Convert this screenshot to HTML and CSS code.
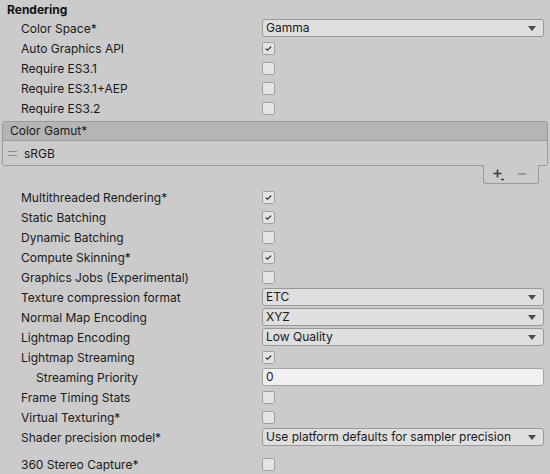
FILE: index.html
```html
<!DOCTYPE html>
<html>
<head>
<meta charset="utf-8">
<link rel="stylesheet" href="styles.css">
</head>
<body>
<div class="panel">
  <div class="section-title">Rendering</div>

  <div class="row"><span class="label">Color Space*</span><div class="dropdown"><span>Gamma</span><i class="arrow"></i></div></div>
  <div class="row"><span class="label">Auto Graphics API</span><span class="cb checked"><svg viewBox="0 0 13 13"><path d="M3.2 6.6 L5.3 8.6 L9.6 4.2" fill="none" stroke="#1a1a1a" stroke-width="1.3"/></svg></span></div>
  <div class="row"><span class="label">Require ES3.1</span><span class="cb"></span></div>
  <div class="row"><span class="label">Require ES3.1+AEP</span><span class="cb"></span></div>
  <div class="row"><span class="label">Require ES3.2</span><span class="cb"></span></div>

  <div class="list">
    <div class="list-head">Color Gamut*</div>
    <div class="list-body"><span class="handle"></span><span>sRGB</span></div>
  </div>
  <div class="list-foot-wrap">
    <div class="list-foot">
      <span class="plus"><svg viewBox="0 0 12 12" width="12" height="12"><path d="M0.5 4.5 H8.5 M4.5 0.5 V8.5" stroke="#3a3a3a" stroke-width="1.6" fill="none"/><path d="M8 10.5 H11" stroke="#3a3a3a" stroke-width="1.4"/></svg></span>
      <span class="minus"></span>
    </div>
  </div>

  <div class="row"><span class="label">Multithreaded Rendering*</span><span class="cb checked"><svg viewBox="0 0 13 13"><path d="M3.2 6.6 L5.3 8.6 L9.6 4.2" fill="none" stroke="#1a1a1a" stroke-width="1.3"/></svg></span></div>
  <div class="row"><span class="label">Static Batching</span><span class="cb checked"><svg viewBox="0 0 13 13"><path d="M3.2 6.6 L5.3 8.6 L9.6 4.2" fill="none" stroke="#1a1a1a" stroke-width="1.3"/></svg></span></div>
  <div class="row"><span class="label">Dynamic Batching</span><span class="cb"></span></div>
  <div class="row"><span class="label">Compute Skinning*</span><span class="cb checked"><svg viewBox="0 0 13 13"><path d="M3.2 6.6 L5.3 8.6 L9.6 4.2" fill="none" stroke="#1a1a1a" stroke-width="1.3"/></svg></span></div>
  <div class="row"><span class="label">Graphics Jobs (Experimental)</span><span class="cb"></span></div>
  <div class="row"><span class="label">Texture compression format</span><div class="dropdown"><span>ETC</span><i class="arrow"></i></div></div>
  <div class="row"><span class="label">Normal Map Encoding</span><div class="dropdown"><span>XYZ</span><i class="arrow"></i></div></div>
  <div class="row"><span class="label">Lightmap Encoding</span><div class="dropdown"><span>Low Quality</span><i class="arrow"></i></div></div>
  <div class="row"><span class="label">Lightmap Streaming</span><span class="cb checked"><svg viewBox="0 0 13 13"><path d="M3.2 6.6 L5.3 8.6 L9.6 4.2" fill="none" stroke="#1a1a1a" stroke-width="1.3"/></svg></span></div>
  <div class="row"><span class="label indent">Streaming Priority</span><div class="textfield">0</div></div>
  <div class="row"><span class="label">Frame Timing Stats</span><span class="cb"></span></div>
  <div class="row"><span class="label">Virtual Texturing*</span><span class="cb"></span></div>
  <div class="row"><span class="label">Shader precision model*</span><div class="dropdown"><span>Use platform defaults for sampler precision</span><i class="arrow"></i></div></div>
  <div class="row spaced"><span class="label">360 Stereo Capture*</span><span class="cb"></span></div>
</div>
</body>
</html>
```

FILE: styles.css
```css
html, body {
  margin: 0;
  padding: 0;
  background: #cbcbcb;
}
body {
  width: 550px;
  height: 474px;
  overflow: hidden;
  font-family: Inter, "Noto Sans", sans-serif;
  font-size: 12px;
  color: #1a1a1a;
}
.panel {
  display: flex;
  flex-direction: column;
}
.section-title {
  height: 19px;
  line-height: 20px;
  padding-left: 7px;
  font-weight: bold;
  color: #111111;
}
.row {
  display: grid;
  grid-template-columns: 262px 1fr;
  align-items: center;
  height: 18px;
  margin-bottom: 2px;
  padding-right: 6px;
}
.row.spaced {
  margin-top: 7px;
}
.label {
  padding-left: 21px;
  white-space: nowrap;
}
.label.indent {
  padding-left: 36px;
}
.dropdown {
  height: 16px;
  border: 1px solid #999999;
  border-radius: 3px;
  background: #dfdfdf;
  display: flex;
  align-items: center;
  justify-content: space-between;
  padding: 0 7px 0 3px;
  line-height: 16px;
}
.arrow {
  width: 0;
  height: 0;
  border-left: 4px solid transparent;
  border-right: 4px solid transparent;
  border-top: 5px solid #4a4a4a;
}
.textfield {
  height: 16px;
  line-height: 16px;
  border: 1px solid #a4a4a4;
  border-radius: 3px;
  background: #f0f0f0;
  padding-left: 3px;
}
.cb {
  width: 11px;
  height: 11px;
  border: 1px solid #a0a0a0;
  border-radius: 2px;
  background: #e4e4e4;
  display: flex;
}
.cb svg {
  width: 11px;
  height: 11px;
}
.list {
  margin: 2px 2px 0 2px;
  border: 1px solid #9a9a9a;
  border-radius: 3px;
  overflow: hidden;
}
.list-head {
  height: 18px;
  line-height: 18px;
  background: #b5b5b5;
  border-bottom: 1px solid #9a9a9a;
  padding-left: 7px;
}
.list-body {
  height: 24px;
  display: flex;
  align-items: center;
  background: #cbcbcb;
}
.handle {
  width: 9px;
  height: 5px;
  border-top: 1px solid #8a8a8a;
  border-bottom: 1px solid #8a8a8a;
  margin: 0 7px 0 5px;
  box-sizing: border-box;
}
.list-foot-wrap {
  display: flex;
  justify-content: flex-end;
  padding-right: 11px;
  margin-top: -1px;
  margin-bottom: 4px;
}
.list-foot {
  width: 56px;
  height: 19px;
  border: 1px solid #9a9a9a;
  border-top: none;
  border-radius: 0 0 3px 3px;
  background: #cbcbcb;
  display: flex;
  align-items: center;
  gap: 13px;
  padding-left: 9px;
  box-sizing: border-box;
}
.plus {
  display: flex;
  margin-top: 1px;
}
.minus {
  width: 8px;
  height: 2px;
  background: #9a9a9a;
}
```
